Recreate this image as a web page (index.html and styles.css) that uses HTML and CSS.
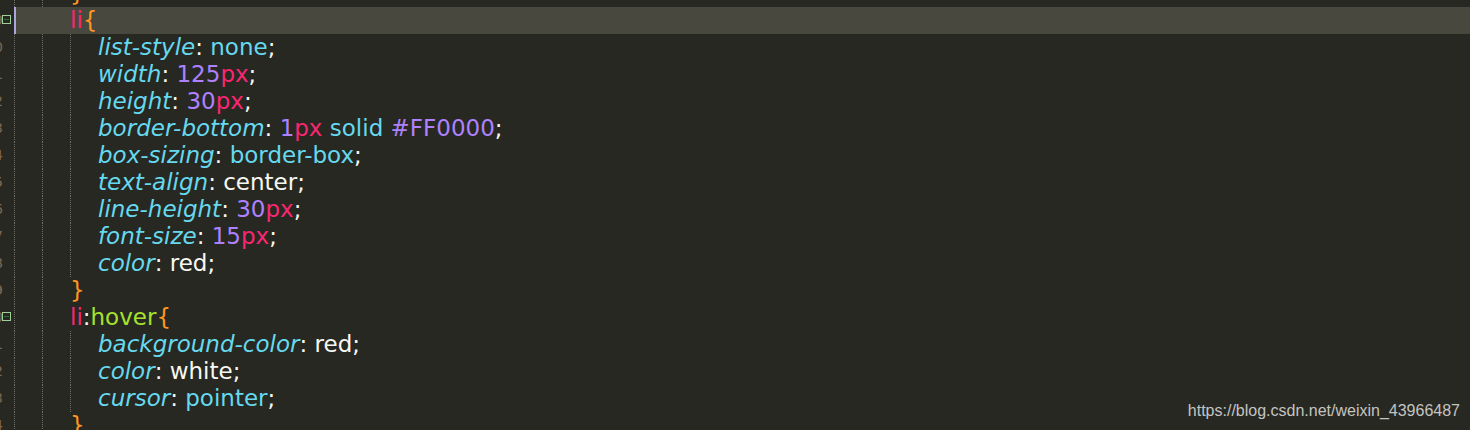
FILE: index.html
```html
<!DOCTYPE html>
<html>
<head>
  <title>styles - editor</title>
  <link rel="stylesheet" href="styles.css">
</head>
<body>
  <!-- Editor view -->
  <div class="editor">
    <div class="code">
      <div class="line"><span class="gutter"><span class="num">148</span></span><span class="ind"></span><span class="ind"></span><span class="text"><span class="brace">}</span></span></div>
      <div class="line current"><span class="gutter"><span class="num">149</span><span class="fold"></span></span><span class="ind"></span><span class="ind"></span><span class="text"><span class="tag">li</span><span class="brace">{</span></span></div>
      <div class="line"><span class="gutter"><span class="num">150</span></span><span class="ind"></span><span class="ind"></span><span class="ind"></span><span class="text"><span class="prop">list-style</span>: <span class="val">none</span>;</span></div>
      <div class="line"><span class="gutter"><span class="num">151</span></span><span class="ind"></span><span class="ind"></span><span class="ind"></span><span class="text"><span class="prop">width</span>: <span class="num-val">125</span><span class="unit">px</span>;</span></div>
      <div class="line"><span class="gutter"><span class="num">152</span></span><span class="ind"></span><span class="ind"></span><span class="ind"></span><span class="text"><span class="prop">height</span>: <span class="num-val">30</span><span class="unit">px</span>;</span></div>
      <div class="line"><span class="gutter"><span class="num">153</span></span><span class="ind"></span><span class="ind"></span><span class="ind"></span><span class="text"><span class="prop">border-bottom</span>: <span class="num-val">1</span><span class="unit">px</span> <span class="val">solid</span> <span class="num-val">#FF0000</span>;</span></div>
      <div class="line"><span class="gutter"><span class="num">154</span></span><span class="ind"></span><span class="ind"></span><span class="ind"></span><span class="text"><span class="prop">box-sizing</span>: <span class="val">border-box</span>;</span></div>
      <div class="line"><span class="gutter"><span class="num">155</span></span><span class="ind"></span><span class="ind"></span><span class="ind"></span><span class="text"><span class="prop">text-align</span>: center;</span></div>
      <div class="line"><span class="gutter"><span class="num">156</span></span><span class="ind"></span><span class="ind"></span><span class="ind"></span><span class="text"><span class="prop">line-height</span>: <span class="num-val">30</span><span class="unit">px</span>;</span></div>
      <div class="line"><span class="gutter"><span class="num">157</span></span><span class="ind"></span><span class="ind"></span><span class="ind"></span><span class="text"><span class="prop">font-size</span>: <span class="num-val">15</span><span class="unit">px</span>;</span></div>
      <div class="line"><span class="gutter"><span class="num">158</span></span><span class="ind"></span><span class="ind"></span><span class="ind"></span><span class="text"><span class="prop">color</span>: red;</span></div>
      <div class="line"><span class="gutter"><span class="num">159</span></span><span class="ind"></span><span class="ind"></span><span class="text"><span class="brace">}</span></span></div>
      <div class="line"><span class="gutter"><span class="num">160</span><span class="fold"></span></span><span class="ind"></span><span class="ind"></span><span class="text"><span class="tag">li</span>:<span class="pseudo">hover</span><span class="brace">{</span></span></div>
      <div class="line"><span class="gutter"><span class="num">161</span></span><span class="ind"></span><span class="ind"></span><span class="ind"></span><span class="text"><span class="prop">background-color</span>: red;</span></div>
      <div class="line"><span class="gutter"><span class="num">162</span></span><span class="ind"></span><span class="ind"></span><span class="ind"></span><span class="text"><span class="prop">color</span>: white;</span></div>
      <div class="line"><span class="gutter"><span class="num">163</span></span><span class="ind"></span><span class="ind"></span><span class="ind"></span><span class="text"><span class="prop">cursor</span>: <span class="val">pointer</span>;</span></div>
      <div class="line"><span class="gutter"><span class="num">164</span></span><span class="ind"></span><span class="ind"></span><span class="text"><span class="brace">}</span></span></div>
    </div>
    <div class="watermark">https://blog.csdn.net/weixin_43966487</div>
  </div>
</body>
</html>
```

FILE: styles.css
```css
/* Page */
body {
  margin: 0;
  background-color: #272822; /* Monokai background */
  overflow: hidden;
}

.editor {
  position: relative;
  height: 430px;
  overflow: hidden;
  font-family: "DejaVu Sans", sans-serif;
  font-size: 23px;
}

/* Code lines */
.code {
  margin-top: -20px;
}

.line {
  display: flex;
  height: 27px;
  line-height: 27px;
  white-space: pre;
  color: #f8f8f2;
}

.line.current {
  background-color: #49483e;
}

/* Gutter with cut-off line numbers and fold markers */
.gutter {
  position: relative;
  width: 14px;
  flex-shrink: 0;
  background-color: #272822;
}

.num {
  display: block;
  width: 3px;
  overflow: hidden;
  direction: rtl;
  font-size: 14px;
  color: #7d6a52;
}

.fold {
  position: absolute;
  top: 8px;
  left: 2px;
  width: 7px;
  height: 7px;
  border: 1px solid #9fd09c;
}

.fold:after {
  content: "";
  position: absolute;
  top: 3px;
  left: 1px;
  width: 5px;
  height: 1px;
  background-color: #2f6b2c;
}

.current .gutter:after {
  content: "";
  position: absolute;
  top: 0;
  right: -2px;
  width: 2px;
  height: 27px;
  background-color: #aaa6dc;
}

/* Indent guides */
.ind {
  width: 27px;
  flex-shrink: 0;
  border-left: 1px dotted #6e6e66;
}

.current .ind {
  border-left-color: transparent;
}

/* Syntax colours */
.tag {
  color: #f92672;
}

.brace {
  color: #fd971f;
}

.pseudo {
  color: #a6e22e;
}

.prop {
  color: #66d9ef;
  font-style: italic;
}

.val {
  color: #66d9ef;
}

.num-val {
  color: #ae81ff;
}

.unit {
  color: #f92672;
}

/* Blog watermark */
.watermark {
  position: absolute;
  right: 10px;
  bottom: 10px;
  font-family: "Liberation Sans", Arial, sans-serif;
  font-size: 16px;
  color: #c4c4c0;
}
```
